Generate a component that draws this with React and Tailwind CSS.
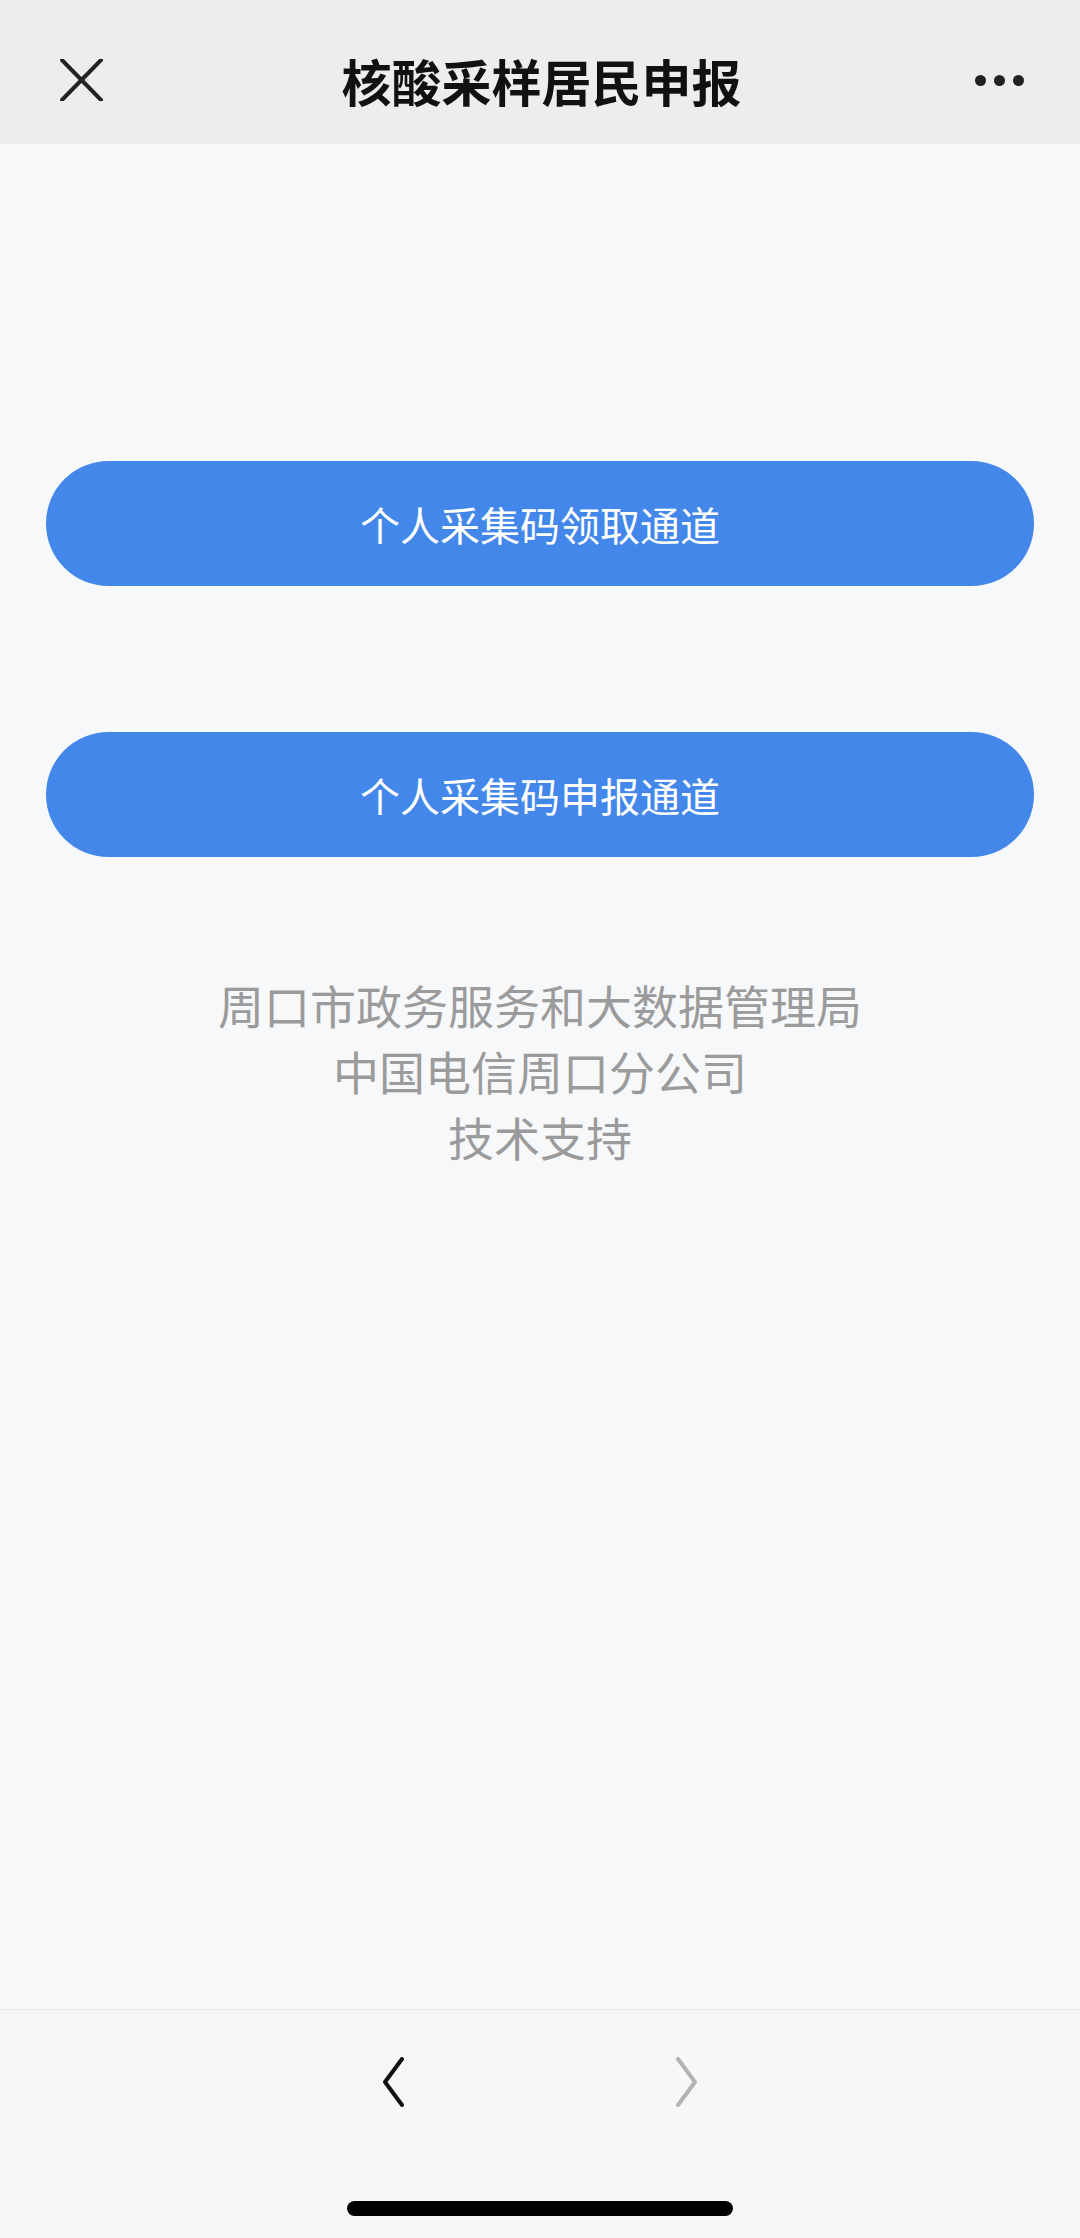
import React from "react";

const font = { fontFamily: '"Noto Sans CJK SC", "Noto Sans", sans-serif' };

const ChannelButton = ({ label }) => {
  return (
    <button className="w-full h-[125px] rounded-full bg-[#4287e9] text-white text-[40px] font-normal flex items-center justify-center">
      {label}
    </button>
  );
};

const App = () => {
  return (
    <div
      className="w-[1080px] h-[2238px] flex flex-col bg-[#f7f8fa] overflow-hidden"
      style={font}
    >
      {/* header */}
      <div className="h-[144px] bg-[#ededed] flex items-center justify-between pl-[60px] pr-[56px] pt-[16px] shrink-0">
        <svg width="43" height="42" viewBox="0 0 43 42" className="text-[#222]">
          <path
            d="M2 1 L41 41 M41 1 L2 41"
            stroke="currentColor"
            strokeWidth="4"
            strokeLinecap="round"
          />
        </svg>
        <div className="text-[50px] font-bold text-[#111] leading-none ml-[6px]">
          核酸采样居民申报
        </div>
        <div className="flex gap-[8px] items-center w-[50px] justify-end">
          <span className="w-[11px] h-[11px] rounded-full bg-[#222]" />
          <span className="w-[11px] h-[11px] rounded-full bg-[#222]" />
          <span className="w-[11px] h-[11px] rounded-full bg-[#222]" />
        </div>
      </div>

      {/* main */}
      <div className="flex-1 flex flex-col px-[46px] pt-[317px]">
        <ChannelButton label="个人采集码领取通道" />
        <div className="h-[146px]" />
        <ChannelButton label="个人采集码申报通道" />
        <div className="mt-[114px] flex flex-col items-center text-[46px] leading-[66px] text-[#9b9b9b]">
          <p>周口市政务服务和大数据管理局</p>
          <p>中国电信周口分公司</p>
          <p>技术支持</p>
        </div>
      </div>

      {/* bottom toolbar */}
      <div className="h-[229px] shrink-0 bg-[#f7f7f7] border-t border-[#e6e6e6] flex flex-col items-center">
        <div className="flex items-center gap-[264px] mt-[46px] h-[52px]">
          <svg width="30" height="50" viewBox="0 0 30 50">
            <path
              d="M24 2 L7 25 L24 48"
              fill="none"
              stroke="#111"
              strokeWidth="4"
              strokeLinecap="round"
              strokeLinejoin="round"
            />
          </svg>
          <svg width="30" height="50" viewBox="0 0 30 50">
            <path
              d="M6 2 L23 25 L6 48"
              fill="none"
              stroke="#b3b3b3"
              strokeWidth="4"
              strokeLinecap="round"
              strokeLinejoin="round"
            />
          </svg>
        </div>
        <div className="mt-[93px] w-[386px] h-[15px] rounded-full bg-black" />
      </div>
    </div>
  );
};

export default App;
